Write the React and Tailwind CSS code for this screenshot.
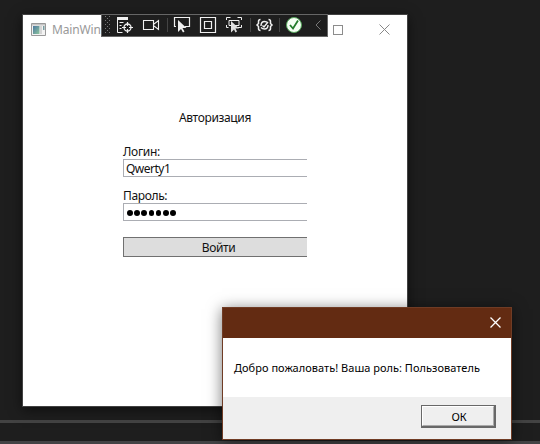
const UI = "font-['Noto_Sans','Open_Sans',sans-serif]";

function Cross({ className, weight = 1 }) {
  return (
    <svg className={className} width="11" height="11" viewBox="0 0 11 11" fill="none" stroke="currentColor" strokeWidth={weight}>
      <path d="M.5.5l10 10M10.5.5l-10 10" />
    </svg>
  );
}

function DebugToolbar() {
  return (
    <div className="absolute left-[101px] top-3.5 h-[23px] w-[227px] border border-[#666] bg-[#1e1e1e]">
      <svg className="block" width="225" height="21" viewBox="102 15 225 21" fill="none" stroke="#f0f0f0">
        <defs>
          <pattern id="grip" x="105" y="16" width="4" height="4" patternUnits="userSpaceOnUse">
            <path d="M0 0h1v1h-1zM2 2h1v1h-1z" fill="#777" stroke="none" />
          </pattern>
        </defs>
        <path d="M105 16h5v18h-5z" fill="url(#grip)" stroke="none" />
        {/* live visual tree */}
        <path d="M117 17h11v3h-11z" fill="#f0f0f0" stroke="none" />
        <path d="M117.5 20v12.5h5M119.500 22.500h4M119.500 25.500h2M119.500 28.500h2" />
        <circle cx="127.500" cy="27.500" r="3.500" strokeWidth="1.300" />
        <path d="M127.500 22v4M127.500 29v4M122 27.500h4M129 27.500h4" strokeWidth="1.200" />
        {/* camera */}
        <path d="M143.500 20.500h10v9h-10zM154 24l4.500-3.500v9L154 26" strokeWidth="1.100" />
        <path d="M167.500 18v14M250.500 18v14M279.500 18v14" stroke="#444" />
        {/* select element */}
        <path d="M176 26.500h-1.500v-9h15v9H185" strokeWidth="1.200" />
        <path d="M178 20v12l3-3 2 3.500 1.500-1-2-3.500h4z" fill="#f0f0f0" stroke="none" />
        {/* layout adorners */}
        <path d="M200.500 17.500h15v15h-15zM204.500 21.500h7v7h-7z" strokeWidth="1.200" />
        {/* track focused element */}
        <path d="M226.500 20v-2.500h4M237.500 17.500h4V20M226.500 25v2.500h2M241.500 25v2.500h-4M231 25.500h-2v-5h10v5h-4" />
        <path d="M231 21v11.500l3-3 1.500 3 1.500-1-1.500-3h3.500z" fill="#e0e0e0" stroke="none" />
        {/* hot reload */}
        <path d="M260.500 19.500q-2 0-2 2v2l-1.500 1.500 1.500 1.500v2q0 2 2 2M268.500 19.500q2 0 2 2v2l1.500 1.500-1.500 1.500v2q0 2-2 2" strokeWidth="1.500" />
        <path d="M261 26q0-4.500 3.500-4.500 2 0 3.500 1.500M268 25q0 4-3.500 4-2 0-3.500-1.500M262.500 25.500l1.500 1.500 4-5" strokeWidth="1.400" />
        <circle cx="294" cy="25" r="7.500" fill="#f5fff4" stroke="#55a75b" />
        <path d="M290 25l3 3.500 5-8" stroke="#237c2b" strokeWidth="1.800" />
        <path d="M320.500 20.500L316 25l4.500 4.500" stroke="#777" />
      </svg>
    </div>
  );
}

function MainWindow() {
  return (
    <section className="absolute left-[22px] top-3.5 h-[393px] w-[386px] border border-[#424242] bg-white shadow-[0_3px_12px_#0008]">
      <header className="flex h-[29px] items-center text-[#999]">
        <svg className="ml-2 shrink-0" width="15" height="13" viewBox="0 0 15 13">
          <defs>
            <linearGradient id="app" x2="1" y2="1">
              <stop stopColor="#4b78a0" />
              <stop offset="1" stopColor="#8fc69e" />
            </linearGradient>
          </defs>
          <path d="M.5.5h14v12H.5z" fill="#f3f3f3" stroke="#999" />
          <path d="M1 1h13v1.500H1z" fill="#c5c5c5" />
          <path d="M2 3h6.500v8H2z" fill="url(#app)" />
          <path d="M9 3h2v8H9z" fill="#d5d5d5" />
          <path d="M12 3h1.500v4H12z" fill="#779ca0" />
        </svg>
        <span className="ml-[6px] whitespace-nowrap text-[12px] tracking-[-0.15px]">MainWin</span>
        <span className="ml-auto mr-9 size-[10px] border border-[#8c8c8c]" />
        <Cross className="mr-[17px] text-[#888]" />
      </header>
      <form className="ml-[100px] mt-[66px] flex w-[184px] flex-col text-[12px] leading-4 text-[#111]">
        <h1 className="text-center tracking-[-0.35px]">Авторизация</h1>
        <label className="mt-[18px] h-[15px] tracking-[-0.3px]">Логин:</label>
        <div className="h-[18px] border border-r-0 border-[#abadb3] pl-0.5 leading-[18px] tracking-[-0.5px]">Qwerty1</div>
        <label className="mt-[11px] h-[15px] tracking-[-0.35px]">Пароль:</label>
        <div className="flex h-[18px] items-center gap-[1.600px] border border-r-0 border-[#abadb3] pl-[3px] pt-0.5">
          {[0, 1, 2, 3, 4, 5, 6].map((n) => (
            <i key={n} className="size-[5.600px] rounded-full bg-black" />
          ))}
        </div>
        <div className="mt-4 h-5 border border-r-0 border-[#707070] bg-[#ddd] pl-1.5 text-center leading-5 tracking-[-0.4px]">Войти</div>
      </form>
    </section>
  );
}

function MessageDialog() {
  return (
    <section className="absolute left-[222px] top-[307px] flex h-[133px] w-[290px] flex-col border border-[#703c25] bg-white shadow-[0_2px_14px_#0008]">
      <header className="flex h-[30px] items-center justify-end bg-[#632b12] pb-0.5 pr-2.5 text-white">
        <Cross weight={1.3} />
      </header>
      <p className="flex h-[59px] items-center whitespace-nowrap pl-[11px] pt-0.5 text-[11px] tracking-[0.03px] text-black">
        Добро пожаловать! Ваша роль: Пользователь
      </p>
      <footer className="flex flex-1 justify-end bg-[#efefef] pr-[15px] pt-2">
        <div className="h-[23px] w-[75px] border border-b-2 border-r-2 border-[#686868] text-center text-[11px] text-black">
          <div className="h-full border border-b-[#aaa] border-l-white border-r-[#aaa] border-t-white pl-0.5 leading-5">ОК</div>
        </div>
      </footer>
    </section>
  );
}

export default function App() {
  return (
    <main className={`${UI} relative flex h-[444px] w-[540px] flex-col overflow-hidden bg-[#1e1e1e]`}>
      <div className="mt-[420px] h-[3px] bg-[#434343]" />
      <div className="mt-[18px] h-[3px] bg-[#434345]" />
      <MainWindow />
      <DebugToolbar />
      <MessageDialog />
    </main>
  );
}
